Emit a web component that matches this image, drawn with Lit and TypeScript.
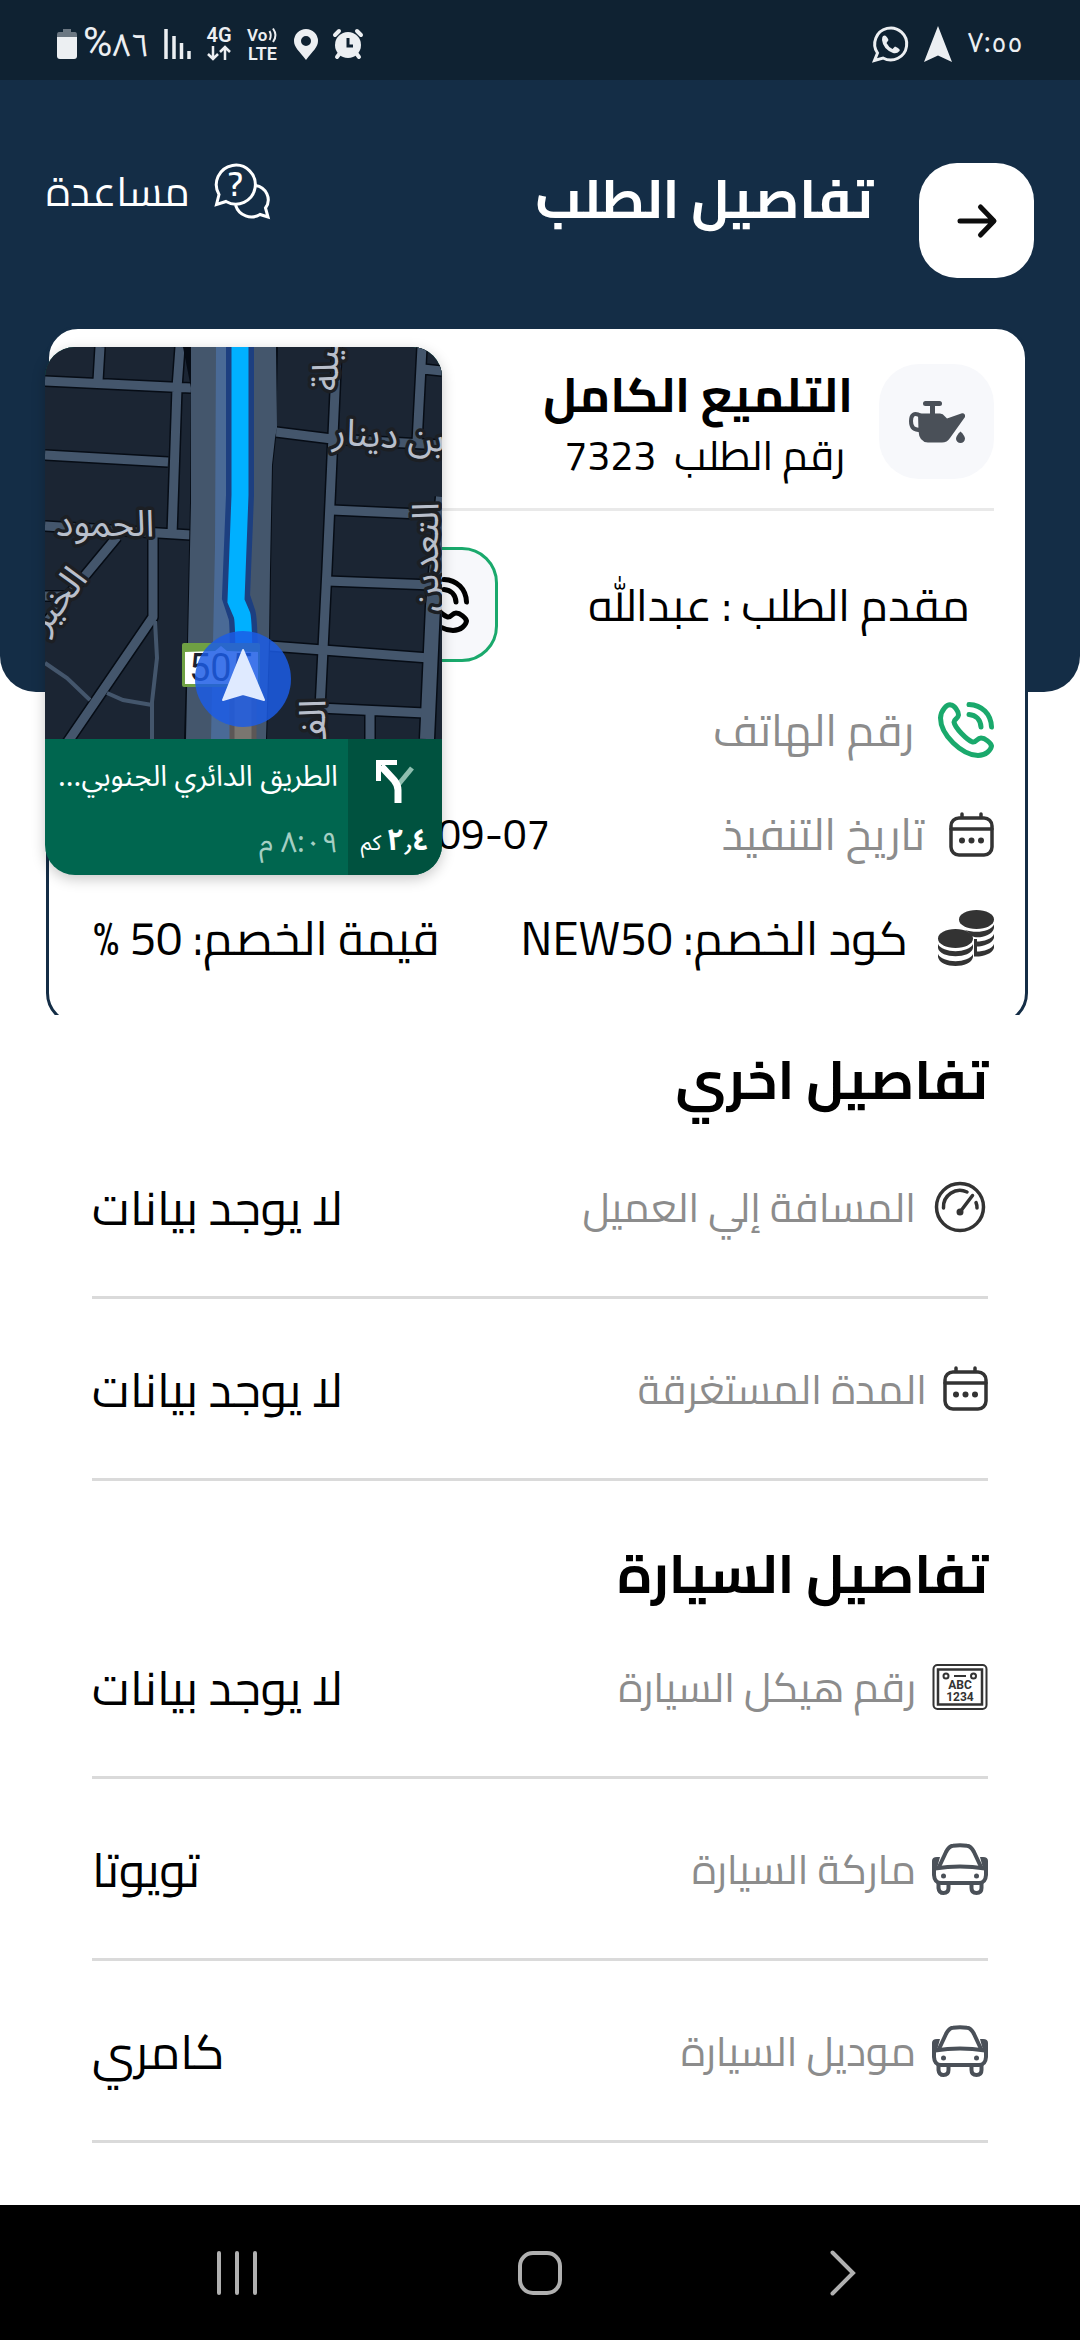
import { LitElement, html, svg, css } from "lit";
import { customElement, property } from "lit/decorators.js";

const phoneShape = svg`
  <path d="M13 3C9 2 3 8 2.5 16C2.5 33 24 53 40 53.5C48 53.5 53 48 53.5 44C53 41 47 36 43 36C39 36 38 41 34.5 40C29 38 17 26 16 20C16 17 20 17 20.5 13C20.5 9 16 3 13 3Z"/>
  <path d="M31 2.500C44 3 53 12 53.500 25M31 12.500C38 13 42.500 18 43 25"/>`;

const icons = {
  back: html`<svg width="40" height="34" viewBox="0 0 40 34" fill="none" stroke="#0d0d0d" stroke-width="5" stroke-linecap="round" stroke-linejoin="round"><path d="M3 17H36M23.500 3L37 17L23.500 31"/></svg>`,
  help: html`<svg width="56" height="56" viewBox="0 0 56 56" fill="none" stroke="#fff" stroke-width="3" stroke-linejoin="miter">
    <path d="M5 31.500A19.500 19.500 0 1 1 12 38.500L2.500 41.500Z"/>
    <path d="M41.500 22.500C52 24 58 36 51.500 45L54 54L46 51.500C37 57 25 53 21.500 42"/>
    <text x="21.500" y="33" font-family="Cairo, 'Noto Sans', sans-serif" font-size="34" font-weight="600" text-anchor="middle" fill="#fff" stroke="none">?</text></svg>`,
  oil: html`<svg width="56" height="42" viewBox="0 0 56 42" fill="#4a5058">
    <rect x="14" y="0" width="19" height="5" rx="2.500"/><rect x="21" y="3" width="5" height="11"/>
    <path d="M9 12.500H31Q34 12.500 36 15.500L38 17.500L53 12.300Q56.500 12 56 16L41 37Q38 41.500 33 41.500H19Q10 41 9.500 30Z"/>
    <path d="M12 15C5 10.500 2 14 2 20C2 27 5 29 12 29" fill="none" stroke="#4a5058" stroke-width="4"/>
    <path d="M51.500 30.500C54 33 56 35.500 56 37.500A4.500 4.500 0 0 1 47 37.500C47 35.500 49 33 51.500 30.500Z"/></svg>`,
  phone: html`<svg width="56" height="56" viewBox="0 0 56 56" fill="none" stroke="currentColor" stroke-width="5" stroke-linecap="round" stroke-linejoin="round">${phoneShape}</svg>`,
  calendar: html`<svg width="45" height="45" viewBox="0 0 45 45" fill="none" stroke="#333" stroke-width="3.500" stroke-linecap="round">
    <rect x="2" y="6" width="41" height="37" rx="8"/><path d="M2 17H43M13 2V5M32 2V5"/>
    <g fill="#333" stroke="none"><circle cx="13" cy="28.500" r="3"/><circle cx="22.500" cy="28.500" r="3"/><circle cx="32" cy="28.500" r="3"/></g></svg>`,
  coins: html`<svg width="56" height="56" viewBox="0 0 56 56" fill="#333">
    <ellipse cx="38.500" cy="9.500" rx="17.500" ry="9.500"/>
    <path d="M27 20C38 23.500 52 22 56 14.500V18C54 27 38 29 34 26Q31 22 27 20Z"/>
    <path d="M36 31.500C45 32 54 29 56 24V28C54 34 44 37 37 36.500Z"/>
    <path d="M36 41.500C45 42 54 39 56 34V38C54 44 45 47 36 46.500Z"/>
    <path d="M36 29H39V46H36Z"/>
    <ellipse cx="17.500" cy="28.500" rx="17.500" ry="9.500"/>
    <path d="M0 34C4 43.500 31 43.500 35 34V38C33 49 2 49 0 38Z"/>
    <path d="M0 44C4 53.500 31 53.500 35 44V47C33 59 2 59 0 47Z"/></svg>`,
  gauge: html`<svg width="56" height="56" viewBox="0 0 56 56" fill="none" stroke="#333" stroke-width="3.500" stroke-linecap="round">
    <circle cx="28" cy="28" r="23.500"/><path d="M11.500 29A16.500 16.500 0 0 1 35 13M44 23.500Q45 26 45 29"/>
    <path d="M28 33L40.500 16.500"/><circle cx="28" cy="33" r="2.500" fill="#333" stroke-width="2"/></svg>`,
  plate: html`<svg width="56" height="46" viewBox="0 0 56 46" fill="none" stroke="#333" stroke-width="2">
    <rect x="1.500" y="1" width="53" height="44" rx="4"/><rect x="6" y="5.500" width="44" height="35" stroke-width="2.500"/>
    <circle cx="14" cy="12" r="2.500"/><circle cx="41.500" cy="12" r="2.500"/><path d="M22 12H34"/>
    <g fill="#333" stroke="none" font-family="Roboto, 'Noto Sans', sans-serif" font-weight="700" text-anchor="middle"><text x="28" y="25" font-size="12">ABC</text><text x="28" y="36.500" font-size="12">1234</text></g></svg>`,
  car: html`<svg width="56" height="52" viewBox="0 0 56 52" fill="none" stroke="#4a5058" stroke-width="4">
    <path d="M6.500 25L14 9Q17 3 21 2.700Q28 2 35 2.700Q39 3 42 9L49.500 25"/>
    <path d="M3 25.500Q28 21.500 53 25.500"/>
    <path d="M2 24V32Q2.500 40 9 40H47Q53.500 40 54 32V24"/>
    <path d="M6.500 40V45Q7 50 11.500 50Q16.500 50 16.500 45V40M39.500 40V45Q39.500 50 44.500 50Q49.500 50 49.500 45V40"/>
    <g fill="#4a5058" stroke="none"><path d="M0 27V18Q0 14 5 14L8 14L5 25ZM56 27V18Q56 14 51 14L48 14L51 25Z"/><circle cx="11.500" cy="33" r="2.500"/><circle cx="44.500" cy="33" r="2.500"/></g></svg>`,
};

const mapDrawing = html`<svg class="map" viewBox="0 0 397 392" role="img" aria-label="الخريطة">
  <rect width="397" height="392" fill="#1b2533"/>
  ${["#060c15", "#44566c"].map((color, pass) => svg`
    <g fill="none" stroke="${color}" stroke-width="${pass ? 9 : 12}" stroke-linejoin="round">
      <path d="M0 34L146 41M55 0L53 34M135 0L132 41L127 188M0 108L123 115M0 179L146 188"/>
      <path d="M108 186V270L22 396M72 190L0 277M0 249H20"/>
      <path d="M231 85L287 92M287 92L397 98M292 0L287 111L282 222L275 362M377 0L372 96M378 22L397 24"/>
      <path d="M287 163L397 168M282 234L388 238M225 299L384 311M274 361L380 366M325 366V392"/>
      <path d="M398 150L388 259L382 392" stroke-width="${pass ? 14 : 17}"/>
    </g>`)}
  <path d="M110 274L112 311L107 355V392M0 316L22 331L45 353M62 346L78 353L107 358" fill="none" stroke="#44566c" stroke-width="4"/>
  <path d="M138 0H233L231 91L228 118L226 222L225 296L222 392H139L142 296L145 155L146 41Z" fill="#060c15"/>
  <path d="M146 0H231L232 81L230 91L227 118L225 222L224 296L221 392H141L143 296L146 155Z" fill="#44566c"/>
  <path d="M171 0H186V252L192 392H166L168 296L170 200Z" fill="#4a6a96"/>
  <path d="M198 330V392" fill="none" stroke="#5c5756" stroke-width="27"/>
  <path d="M198 330V392" fill="none" stroke="#7a7670" stroke-width="17"/>
  <path d="M195 0V148L191 250L197 268Q199 274 199 332" fill="none" stroke="#1d3f80" stroke-width="28"/>
  <path d="M195 0V148L191 254L197 268Q199 274 199 332" fill="none" stroke="#00b0ff" stroke-width="17"/>
  <g class="places">
    <text x="60" y="189">الحمود</text>
    <text transform="translate(287 97) rotate(4)" text-anchor="end" class="from-left">بن دينار</text>
    <text transform="translate(22 260) rotate(-52)">الخير</text>
    <text transform="translate(293 8) rotate(-90)">سيلة</text>
    <text transform="translate(393 210) rotate(-90)">التعدين</text>
    <text transform="translate(280 382) rotate(-90)">الف</text>
  </g>
  <rect x="137" y="296" width="78" height="44" rx="2" fill="#6fa043"/>
  <path d="M140 305L170 304L176 299L182 304L213 305V337H140Z" fill="#fff"/>
  <text x="176" y="334" font-family="Roboto, sans-serif" font-size="38" text-anchor="middle" fill="#1b2130">505</text>
  <circle cx="198" cy="332" r="48" fill="#1b5ce6" fill-opacity=".84"/>
  <path d="M198 303L219 353L198 347L178 353Z" fill="#dfeaff" stroke="#dfeaff" stroke-width="2" stroke-linejoin="round"/>
</svg>`;

@customElement("detail-row")
export class DetailRow extends LitElement {
  static styles = css`
    :host { display: flex; align-items: center; justify-content: space-between; box-sizing: border-box; min-height: 182px; border-bottom: 3px solid #dadada; }
    .label { display: flex; align-items: center; gap: 16px; color: #8c8c8c; font-size: 41px; line-height: 60px; }
    .value { color: #000; font-size: 48px; line-height: 60px; }
    svg { display: block; flex: none; overflow: visible; }
  `;
  @property() icon: keyof typeof icons = "car";
  @property() label = "";
  @property() value = "";
  render() {
    return html`<span class="label">${icons[this.icon]}<span>${this.label}</span></span><span class="value">${this.value}</span>`;
  }
}

@customElement("app-root")
export class AppRoot extends LitElement {
  static styles = css`
    :host { display: block; position: relative; direction: rtl; font-family: Cairo, "Noto Sans", "DejaVu Sans", sans-serif; color: #000; background: #fff; }
    svg { display: block; flex: none; overflow: visible; }
    button { border: 0; padding: 0; background: none; font: inherit; color: inherit; display: flex; align-items: center; justify-content: center; }
    h1, h2, p { margin: 0; }
    .page { display: flex; flex-direction: column; min-height: 100vh; }
    .hero { background: #142d46; border-radius: 0 0 36px 36px; padding-bottom: 414px; }
    .status { display: flex; align-items: center; justify-content: space-between; height: 80px; padding: 8px 57px 0; box-sizing: border-box; background: #0f2232; color: #eceff2; direction: ltr; font-family: "Noto Sans Arabic", "Noto Sans", "DejaVu Sans", sans-serif; font-size: 28px; line-height: 36px; }
    .tray { display: flex; align-items: center; gap: 15px; }
    .battery { display: flex; align-items: center; gap: 6px; font-size: 32px; }
    .percent { font-family: Roboto, sans-serif; font-size: 40px; }
    .bar { display: flex; align-items: flex-start; padding: 83px 46px 0; }
    .back { width: 115px; height: 115px; border-radius: 38px; background: #fff; }
    h1 { margin-inline-start: 46px; color: #fff; font-size: 54px; line-height: 72px; font-weight: 700; }
    .help { margin-inline-start: auto; gap: 24px; color: #fff; font-size: 41px; line-height: 56px; }
    .sheet { overflow: hidden; margin-top: -366px; }
    .card { margin: 0 52px -10px 46px; padding: 35px 31px 32px 44px; border: 3px solid #142d46; border-radius: 32px; background: #fff; }
    .service { display: flex; align-items: flex-start; gap: 26px; padding-bottom: 22px; border-bottom: 3px solid #e9e9e9; }
    .badge { display: flex; align-items: center; justify-content: center; width: 115px; height: 115px; border-radius: 40px; background: #f7f8fb; }
    h2 { font-weight: 700; }
    .service h2 { font-size: 48px; line-height: 60px; }
    .service p { padding-inline-start: 8px; font-size: 41px; line-height: 62px; white-space: pre; }
    .applicant { display: flex; align-items: center; justify-content: space-between; margin: 36px 0 16px; padding: 0 24px 0 290px; font-size: 45px; line-height: 60px; }
    .call { width: 115px; height: 115px; box-sizing: border-box; border: 3px solid #1aa96c; border-radius: 36px; background: #f7f8fb; color: #000; }
    .line { display: flex; align-items: center; justify-content: space-between; min-height: 104px; font-size: 47px; line-height: 60px; }
    .caption { display: flex; align-items: center; gap: 24px; color: #8c8c8c; font-size: 44px; }
    .green { color: #1aa96c; }
    .date { flex: 0 1 457px; font-size: 42px; }
    .code { display: flex; align-items: center; gap: 30px; }
    .group { padding: 42px 92px 0; }
    .group h2 { font-size: 54px; line-height: 46px; padding-bottom: 14px; }
    .group + .group { padding-top: 70px; }
    .group + .group h2 { padding-bottom: 0; }
    .nav { display: flex; direction: ltr; margin-top: auto; height: 135px; padding: 0 85px; background: #000; }
    .nav button { flex: 1; }
    .float { position: absolute; left: 45px; top: 347px; width: 397px; border-radius: 30px; overflow: hidden; box-shadow: 0 4px 14px rgba(0, 0, 0, .22); background: #00664f; color: #fff; font-family: "Noto Sans Arabic", "Noto Sans", "DejaVu Sans", sans-serif; }
    .map { width: 100%; overflow: hidden; }
    .places { font-size: 37px; fill: #b9bfcb; stroke: #1c1f24; stroke-width: 7px; stroke-linejoin: round; paint-order: stroke; text-anchor: middle; }
    .from-left { text-anchor: end; }
    .route { display: flex; height: 136px; }
    .turn { display: flex; flex-direction: column; align-items: center; justify-content: space-between; width: 94px; padding: 20px 0 12px; box-sizing: border-box; background: #00523f; font-size: 21px; line-height: 40px; white-space: nowrap; }
    .turn b { font-size: 30px; }
    .road { flex: 1; min-width: 0; display: flex; flex-direction: column; justify-content: space-between; padding: 18px 10px 12px 8px; box-sizing: border-box; font-size: 29px; line-height: 40px; white-space: nowrap; }
    .eta { color: #a5cfc3; }
  `;

  render() {
    return html`
      <div class="page">
        <header class="hero">
          <div class="status">
            <div class="tray">
              <span class="battery">
                <svg width="20" height="30" viewBox="0 0 20 30"><path d="M6 0H14V3H18Q20 3 20 6V8H0V6Q0 3 2 3H6Z" fill="#6b7782"/><path d="M0 8H20V27Q20 30 17 30H3Q0 30 0 27Z" fill="#eceff2"/></svg>
                <span><span class="percent">%</span>٨٦</span>
              </span>
              <svg width="27" height="30" viewBox="0 0 27 30" stroke="#eceff2" stroke-width="3.500"><path d="M2 0V30M10 7V30M17.500 14V30M25 22V30"/></svg>
              <svg width="26" height="34" viewBox="0 0 26 34" fill="#eceff2"><text x="13" y="15" font-family="Roboto, sans-serif" font-weight="600" font-size="20" text-anchor="middle">4G</text><path d="M7 19V32M2 27L7 32L12 27M19 33V20M14 25L19 20L24 25" fill="none" stroke="#eceff2" stroke-width="2.500"/></svg>
              <svg width="32" height="34" viewBox="0 0 32 34" fill="#eceff2" font-family="Roboto, sans-serif" font-weight="600"><text x="0" y="14" font-size="17">Vo</text><path d="M22.500 4Q25 8.500 22.500 13M26 1.500Q31 8.500 26 15" fill="none" stroke="#eceff2" stroke-width="2"/><text x="15.500" y="33" font-size="18" text-anchor="middle">LTE</text></svg>
              <svg width="24" height="31" viewBox="0 0 24 31" fill="#eceff2"><path fill-rule="evenodd" d="M12 0A12 12 0 0 1 24 12C24 18 19 22 12 31C5 22 0 18 0 12A12 12 0 0 1 12 0ZM12 7A5 5 0 1 0 12 17A5 5 0 1 0 12 7Z"/></svg>
              <svg width="30" height="30" viewBox="0 0 30 30"><path d="M7 24L4 28M23 24L26 28M2 6L6 2M28 6L24 2" stroke="#eceff2" stroke-width="4" stroke-linecap="round"/><circle cx="15" cy="16" r="13" fill="#eceff2"/><path d="M15 9V17H20" fill="none" stroke="#0f2232" stroke-width="3"/></svg>
            </div>
            <div class="tray">
              <svg width="36" height="36" viewBox="0 0 36 36" fill="none" stroke="#eceff2" stroke-width="3"><path d="M4.500 27A16 16 0 1 1 10 32L1.500 34.500Z"/><path d="M10 10Q13 8 15.500 14L13.500 17Q15.500 21 19.500 23L22 20.500Q28 23 26.500 25Q24 28 20 27Q10 23 9 14Q9 11 10 10Z" fill="#eceff2" stroke="none"/></svg>
              <svg width="28" height="36" viewBox="0 0 28 36" fill="#eceff2"><path d="M14 0L28 36L14 29.500L0 36Z"/></svg>
              <span>٧:٥٥</span>
            </div>
          </div>
          <div class="bar">
            <button class="back" aria-label="رجوع">${icons.back}</button>
            <h1>تفاصيل الطلب</h1>
            <button class="help">${icons.help}<span>مساعدة</span></button>
          </div>
        </header>

        <div class="sheet">
          <section class="card">
            <div class="service">
              <span class="badge">${icons.oil}</span>
              <div><h2>التلميع الكامل</h2><p>رقم الطلب  7323</p></div>
            </div>
            <div class="applicant">
              <span>مقدم الطلب : عبدالله</span>
              <button class="call" aria-label="اتصال">${icons.phone}</button>
            </div>
            <div class="line">
              <span class="caption"><span class="green">${icons.phone}</span><span>رقم الهاتف</span></span>
            </div>
            <div class="line">
              <span class="caption">${icons.calendar}<span>تاريخ التنفيذ</span></span>
              <span class="date">09-07</span>
            </div>
            <div class="line">
              <span class="code">${icons.coins}<span>كود الخصم: NEW50</span></span>
              <span>قيمة الخصم: 50 %</span>
            </div>
          </section>
        </div>

        <section class="group">
          <h2>تفاصيل اخري</h2>
          <detail-row icon="gauge" label="المسافة إلي العميل" value="لا يوجد بيانات"></detail-row>
          <detail-row icon="calendar" label="المدة المستغرقة" value="لا يوجد بيانات"></detail-row>
        </section>
        <section class="group">
          <h2>تفاصيل السيارة</h2>
          <detail-row icon="plate" label="رقم هيكل السيارة" value="لا يوجد بيانات"></detail-row>
          <detail-row icon="car" label="ماركة السيارة" value="تويوتا"></detail-row>
          <detail-row icon="car" label="موديل السيارة" value="كامري"></detail-row>
        </section>

        <nav class="nav">
          <button aria-label="التطبيقات الأخيرة"><svg width="40" height="44" viewBox="0 0 40 44" stroke="#b0b0b0" stroke-width="4" stroke-linecap="round"><path d="M2 2V42M20 2V42M38 2V42"/></svg></button>
          <button aria-label="الرئيسية"><svg width="44" height="44" viewBox="0 0 44 44"><rect x="2" y="2" width="40" height="40" rx="13" fill="none" stroke="#b0b0b0" stroke-width="4"/></svg></button>
          <button aria-label="رجوع"><svg width="26" height="46" viewBox="0 0 26 46" fill="none" stroke="#b0b0b0" stroke-width="4" stroke-linecap="round"><path d="M2.500 2.500L23 23L2.500 43.500"/></svg></button>
        </nav>
      </div>

      <aside class="float">
        ${mapDrawing}
        <div class="route">
          <div class="turn">
            <svg width="40" height="44" viewBox="0 0 40 44" fill="none" stroke-width="7"><path d="M23 26L37 9" stroke="#8fbfb0" stroke-width="5"/><path d="M23 44V31Q23 26 19 21L6 7" stroke="#fff"/><path d="M1 1H22V6H6V22H1Z" fill="#fff"/></svg>
            <span><b>٢٫٤</b> كم</span>
          </div>
          <div class="road"><span>الطريق الدائري الجنوبي...</span><span class="eta">٨:٠٩ م</span></div>
        </div>
      </aside>`;
  }
}
